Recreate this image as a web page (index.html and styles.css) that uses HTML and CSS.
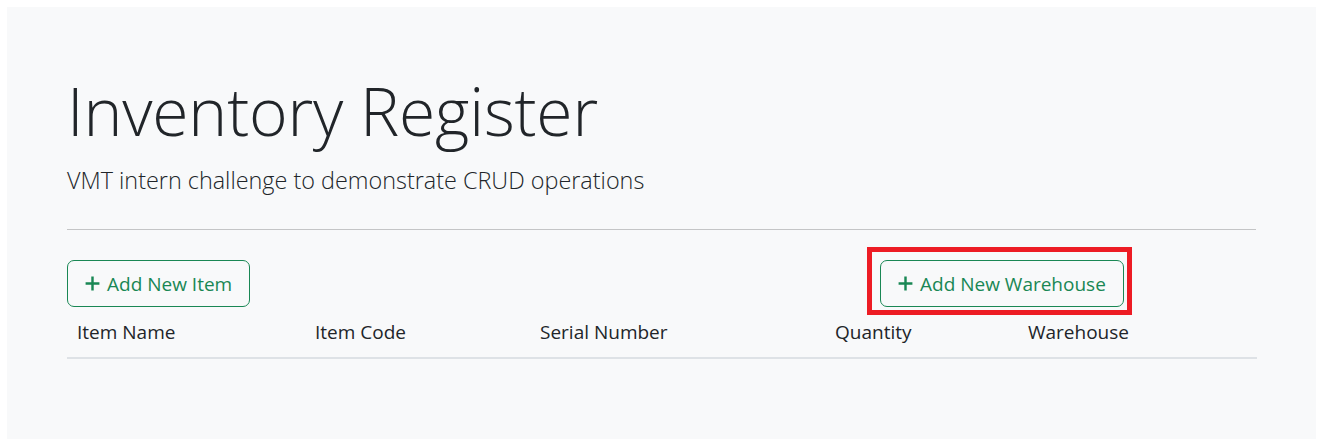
FILE: index.html
```html
<!DOCTYPE html>
<html lang="en">
<head>
<meta charset="utf-8">
<title>Inventory Register</title>
<link rel="stylesheet" href="styles.css">
</head>
<body>
<div class="jumbotron">
  <h1 class="display">Inventory Register</h1>
  <p class="lead">VMT intern challenge to demonstrate CRUD operations</p>
  <hr class="divider">
  <div class="actions">
    <div class="action-cell">
      <button class="btn-outline" type="button">
        <svg class="plus" viewBox="0 0 16 16" aria-hidden="true"><path d="M8 1.5v13M1.5 8h13" /></svg>
        <span>Add New Item</span>
      </button>
    </div>
    <div class="action-cell">
      <span class="highlight">
        <button class="btn-outline" type="button">
          <svg class="plus" viewBox="0 0 16 16" aria-hidden="true"><path d="M8 1.5v13M1.5 8h13" /></svg>
          <span>Add New Warehouse</span>
        </button>
      </span>
    </div>
  </div>
  <table class="table">
    <colgroup>
      <col class="c1"><col class="c2"><col class="c3"><col class="c4"><col class="c5">
    </colgroup>
    <thead>
      <tr>
        <th>Item Name</th>
        <th>Item Code</th>
        <th>Serial Number</th>
        <th>Quantity</th>
        <th>Warehouse</th>
      </tr>
    </thead>
  </table>
</div>
</body>
</html>
```
FILE: styles.css
```css
html, body {
  margin: 0;
  padding: 0;
  background: #ffffff;
}
body {
  padding: 7px;
  font-family: "Open Sans", "Noto Sans", "Liberation Sans", sans-serif;
  color: #212529;
}
.jumbotron {
  background: #f8f9fa;
  height: 432px;
  box-sizing: border-box;
  padding: 61px 60px 60px 60px;
}
.display {
  margin: 0 0 10px 0;
  font-size: 66px;
  font-weight: 300;
  line-height: 84px;
  letter-spacing: -0.2px;
  color: #212529;
}
.lead {
  margin: 0;
  font-size: 23.4px;
  font-weight: 300;
  line-height: 37px;
  color: #212529;
}
.divider {
  margin: 30px 0;
  border: 0;
  border-top: 1px solid #c4c5c6;
  height: 0;
}
.actions {
  display: grid;
  grid-template-columns: 813px auto;
}
.action-cell {
  display: flex;
}
.highlight {
  position: relative;
  display: inline-flex;
}
.highlight::after {
  content: "";
  position: absolute;
  left: -13px;
  top: -13px;
  right: -8px;
  bottom: -8px;
  border: 5px solid #ed1c24;
  pointer-events: none;
}
.btn-outline {
  display: inline-flex;
  align-items: center;
  gap: 6px;
  height: 47px;
  box-sizing: border-box;
  padding: 0 17px 0 16px;
  background: transparent;
  border: 1px solid #198754;
  border-radius: 7px;
  color: #198754;
  font-family: inherit;
  font-size: 19px;
  line-height: 30px;
  cursor: pointer;
}
.plus {
  width: 17px;
  height: 17px;
  stroke: #198754;
  stroke-width: 2.3;
  fill: none;
}
.table {
  width: 100%;
  table-layout: fixed;
  border-collapse: collapse;
}
.c1 { width: 238px; }
.c2 { width: 225px; }
.c3 { width: 295px; }
.c4 { width: 193px; }
.c5 { width: 239px; }
.table th {
  text-align: left;
  font-weight: 400;
  font-size: 19px;
  line-height: 30px;
  padding: 10px;
  border-bottom: 2px solid #dee2e6;
  color: #212529;
}
```
